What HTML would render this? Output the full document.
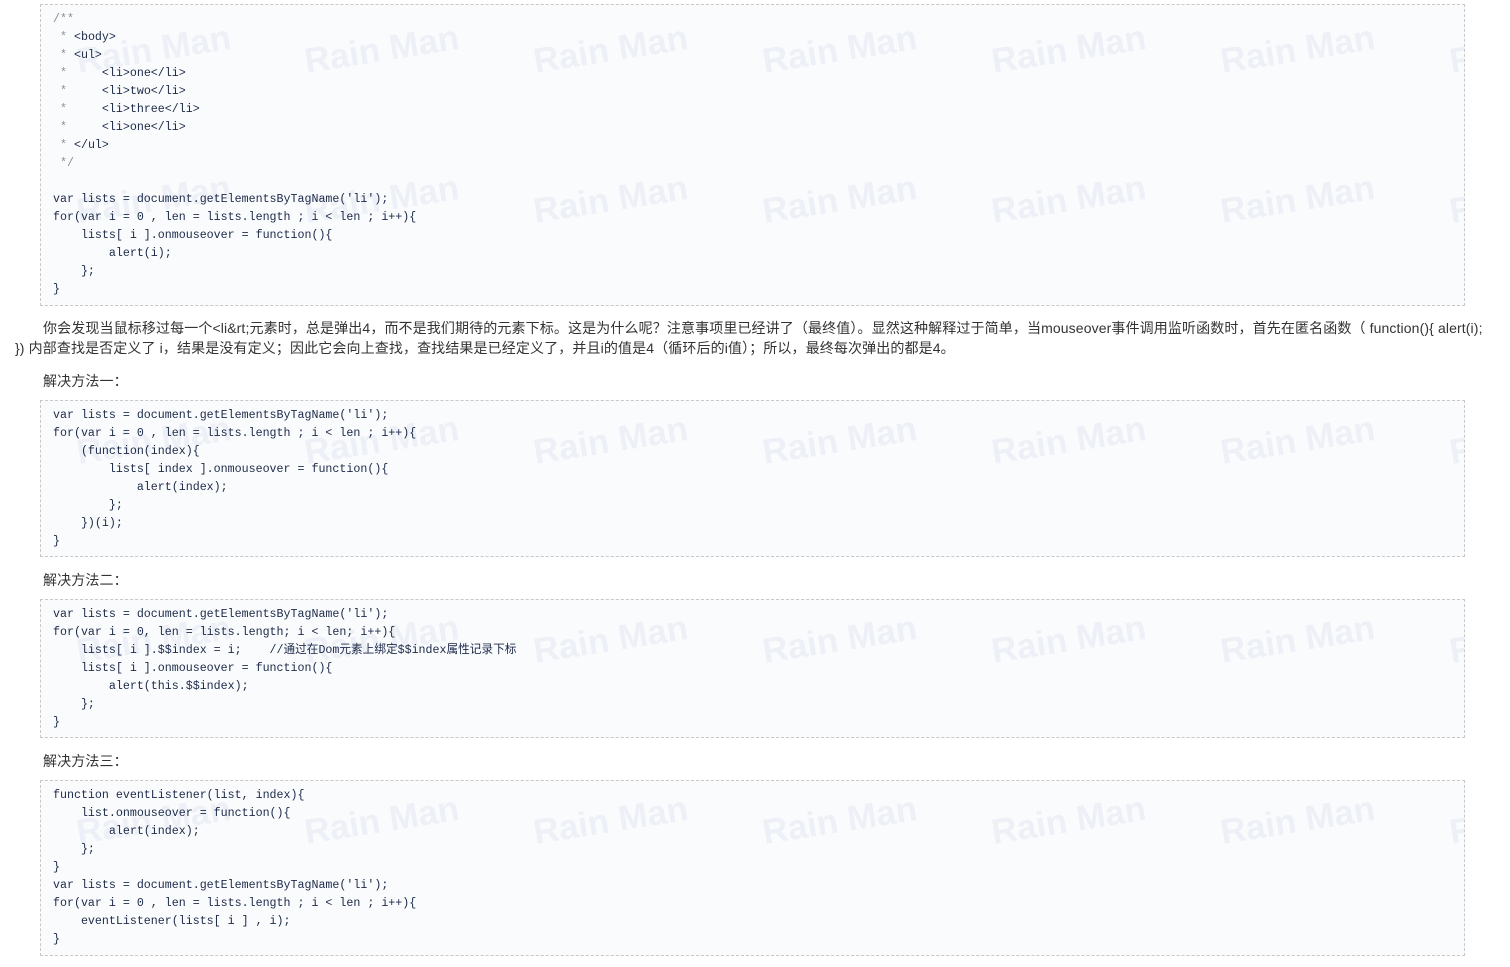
<!DOCTYPE html>
<html><head><meta charset="utf-8">
<style>
html,body{margin:0;padding:0;background:#fff;width:1510px;height:967px;overflow:hidden}
.box{position:absolute;left:40px;width:1423px;border:1px dashed #c8c8c8;background:#fafbfd;overflow:hidden}
pre{position:relative;margin:0;padding:6px 0 0 12px;font-family:"Liberation Mono","Noto Sans CJK SC",monospace;font-size:11.65px;line-height:18px;color:#1c2a48;z-index:1}
.c{color:#8a909a}
.wm{position:absolute;font-family:"Liberation Sans",sans-serif;font-weight:bold;font-size:35px;color:#edf0f6;transform:rotate(-9deg);white-space:nowrap;z-index:0}
p{position:absolute;margin:0;font-family:"Liberation Sans","Noto Sans CJK SC",sans-serif;font-size:14px;color:#333;white-space:nowrap;letter-spacing:0.12px}
</style></head><body>

<div class="box" style="top:4px;height:300px">
<span class="wm" style="left:35px;top:25px">Rain Man</span><span class="wm" style="left:263px;top:25px">Rain Man</span><span class="wm" style="left:492px;top:25px">Rain Man</span><span class="wm" style="left:721px;top:25px">Rain Man</span><span class="wm" style="left:950px;top:25px">Rain Man</span><span class="wm" style="left:1179px;top:25px">Rain Man</span><span class="wm" style="left:1408px;top:25px">Rain Man</span>
<span class="wm" style="left:35px;top:175px">Rain Man</span><span class="wm" style="left:263px;top:175px">Rain Man</span><span class="wm" style="left:492px;top:175px">Rain Man</span><span class="wm" style="left:721px;top:175px">Rain Man</span><span class="wm" style="left:950px;top:175px">Rain Man</span><span class="wm" style="left:1179px;top:175px">Rain Man</span><span class="wm" style="left:1408px;top:175px">Rain Man</span>
<pre><span class="c">/**
 *</span> &lt;body&gt;
<span class="c"> *</span> &lt;ul&gt;
<span class="c"> *</span>     &lt;li&gt;one&lt;/li&gt;
<span class="c"> *</span>     &lt;li&gt;two&lt;/li&gt;
<span class="c"> *</span>     &lt;li&gt;three&lt;/li&gt;
<span class="c"> *</span>     &lt;li&gt;one&lt;/li&gt;
<span class="c"> *</span> &lt;/ul&gt;
<span class="c"> */</span>

var lists = document.getElementsByTagName('li');
for(var i = 0 , len = lists.length ; i &lt; len ; i++){
    lists[ i ].onmouseover = function(){
        alert(i);
    };
}</pre>
</div>

<p style="left:43px;top:318px">你会发现当鼠标移过每一个&lt;li&amp;rt;元素时，总是弹出4，而不是我们期待的元素下标。这是为什么呢？注意事项里已经讲了（最终值）。显然这种解释过于简单，当mouseover事件调用监听函数时，首先在匿名函数（ function(){ alert(i);</p>
<p style="left:15px;top:338px">}) 内部查找是否定义了 i，结果是没有定义；因此它会向上查找，查找结果是已经定义了，并且i的值是4（循环后的i值）；所以，最终每次弹出的都是4。</p>
<p style="left:43px;top:371px">解决方法一：</p>

<div class="box" style="top:400px;height:155px">
<span class="wm" style="left:35px;top:20px">Rain Man</span><span class="wm" style="left:263px;top:20px">Rain Man</span><span class="wm" style="left:492px;top:20px">Rain Man</span><span class="wm" style="left:721px;top:20px">Rain Man</span><span class="wm" style="left:950px;top:20px">Rain Man</span><span class="wm" style="left:1179px;top:20px">Rain Man</span><span class="wm" style="left:1408px;top:20px">Rain Man</span>
<pre>var lists = document.getElementsByTagName('li');
for(var i = 0 , len = lists.length ; i &lt; len ; i++){
    (function(index){
        lists[ index ].onmouseover = function(){
            alert(index);
        };
    })(i);
}</pre>
</div>

<p style="left:43px;top:570px">解决方法二：</p>

<div class="box" style="top:599px;height:137px">
<span class="wm" style="left:35px;top:20px">Rain Man</span><span class="wm" style="left:263px;top:20px">Rain Man</span><span class="wm" style="left:492px;top:20px">Rain Man</span><span class="wm" style="left:721px;top:20px">Rain Man</span><span class="wm" style="left:950px;top:20px">Rain Man</span><span class="wm" style="left:1179px;top:20px">Rain Man</span><span class="wm" style="left:1408px;top:20px">Rain Man</span>
<pre>var lists = document.getElementsByTagName('li');
for(var i = 0, len = lists.length; i &lt; len; i++){
    lists[ i ].$$index = i;    //通过在Dom元素上绑定$$index属性记录下标
    lists[ i ].onmouseover = function(){
        alert(this.$$index);
    };
}</pre>
</div>

<p style="left:43px;top:751px">解决方法三：</p>

<div class="box" style="top:780px;height:174px">
<span class="wm" style="left:35px;top:20px">Rain Man</span><span class="wm" style="left:263px;top:20px">Rain Man</span><span class="wm" style="left:492px;top:20px">Rain Man</span><span class="wm" style="left:721px;top:20px">Rain Man</span><span class="wm" style="left:950px;top:20px">Rain Man</span><span class="wm" style="left:1179px;top:20px">Rain Man</span><span class="wm" style="left:1408px;top:20px">Rain Man</span>
<pre>function eventListener(list, index){
    list.onmouseover = function(){
        alert(index);
    };
}
var lists = document.getElementsByTagName('li');
for(var i = 0 , len = lists.length ; i &lt; len ; i++){
    eventListener(lists[ i ] , i);
}</pre>
</div>

</body></html>
